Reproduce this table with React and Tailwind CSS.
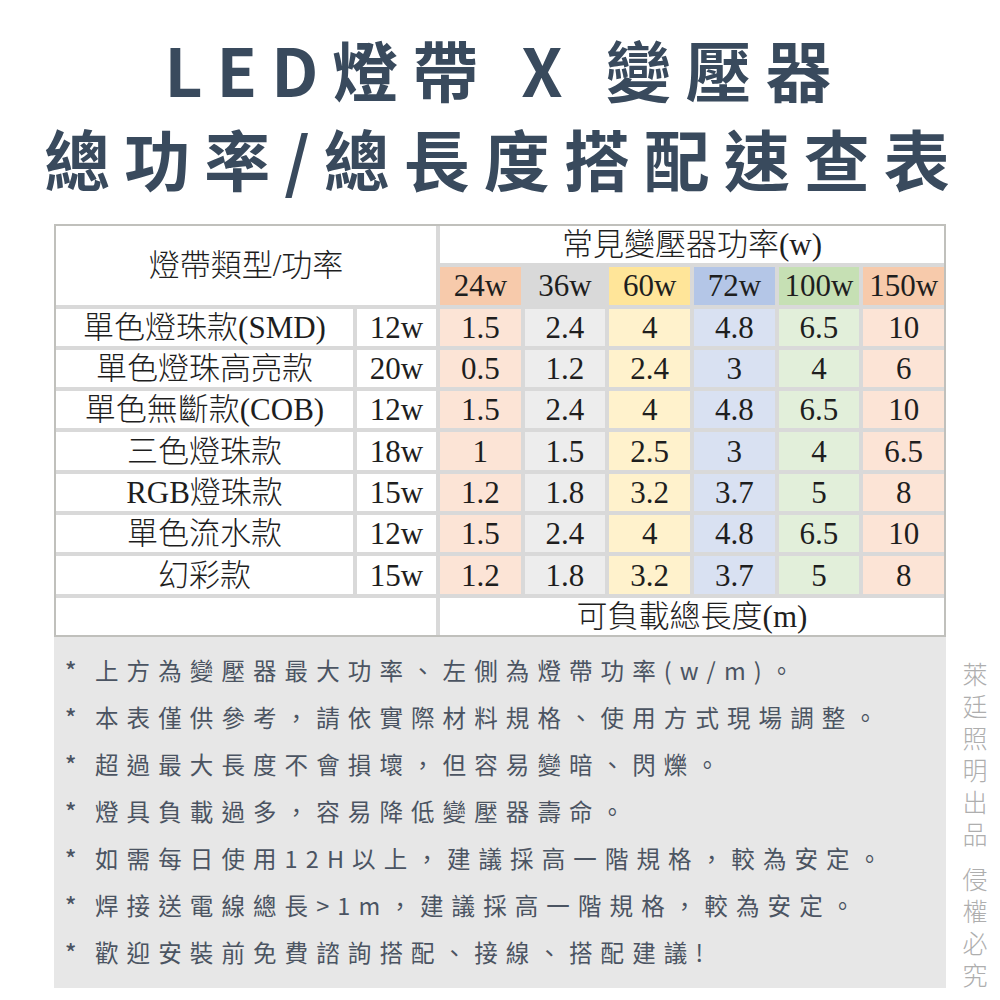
import React from "react";

const headBg = ["bg-[#f7caab]", "bg-[#d9d9d9]", "bg-[#ffe599]", "bg-[#b4c6e7]", "bg-[#c6e0b4]", "bg-[#f7caab]"];
const dataBg = ["bg-[#fce4d6]", "bg-[#ededed]", "bg-[#fff2cc]", "bg-[#d9e1f2]", "bg-[#e2efda]", "bg-[#fce4d6]"];
const watts = ["24w", "36w", "60w", "72w", "100w", "150w"];

const rows = [
  ["單色燈珠款(SMD)", "12w", ["1.5", "2.4", "4", "4.8", "6.5", "10"]],
  ["單色燈珠高亮款", "20w", ["0.5", "1.2", "2.4", "3", "4", "6"]],
  ["單色無斷款(COB)", "12w", ["1.5", "2.4", "4", "4.8", "6.5", "10"]],
  ["三色燈珠款", "18w", ["1", "1.5", "2.5", "3", "4", "6.5"]],
  ["RGB燈珠款", "15w", ["1.2", "1.8", "3.2", "3.7", "5", "8"]],
  ["單色流水款", "12w", ["1.5", "2.4", "4", "4.8", "6.5", "10"]],
  ["幻彩款", "15w", ["1.2", "1.8", "3.2", "3.7", "5", "8"]],
];

const notes = [
  "上方為變壓器最大功率、左側為燈帶功率(w/m)。",
  "本表僅供參考，請依實際材料規格、使用方式現場調整。",
  "超過最大長度不會損壞，但容易變暗、閃爍。",
  "燈具負載過多，容易降低變壓器壽命。",
  "如需每日使用12H以上，建議採高一階規格，較為安定。",
  "焊接送電線總長>1m，建議採高一階規格，較為安定。",
  "歡迎安裝前免費諮詢搭配、接線、搭配建議!",
];

function Cell({ className = "", children }) {
  return (
    <div className={"flex items-center justify-center leading-none whitespace-nowrap " + className}>
      {children}
    </div>
  );
}

export default function App() {
  return (
    <div className="w-[1000px] h-[1000px] bg-white overflow-hidden font-['Noto_Sans_CJK_TC',sans-serif]">
      {/* Title */}
      <div className="h-[224px] pt-[24px] text-center text-[66px] font-bold leading-[89px] text-[#394a5d] whitespace-nowrap">
        <div className="tracking-[14px] pl-[10px]">LED燈帶 X 變壓器</div>
        <div className="tracking-[14px] pl-[8px]">總功率/總長度搭配速查表</div>
      </div>

      <div className="pl-[54px]">
        {/* Table */}
        <div className="w-[892px] h-[413px] border-2 border-[#c0c0bc] bg-[#d9d9d9] grid grid-cols-[297px_79px_repeat(6,1fr)] grid-rows-[repeat(10,1fr)] gap-[4px] text-[31px] text-[#1e1e1e] font-light font-['Liberation_Serif','Noto_Sans_CJK_TC',serif]">
          <Cell className="col-span-2 row-span-2 bg-white">燈帶類型/功率</Cell>
          <Cell className="col-span-6 bg-white">常見變壓器功率(w)</Cell>
          {watts.map((w, i) => (
            <Cell key={w} className={headBg[i]}>{w}</Cell>
          ))}
          {rows.map(([name, w, vals]) => (
            <React.Fragment key={name}>
              <Cell className="bg-white">{name}</Cell>
              <Cell className="bg-white">{w}</Cell>
              {vals.map((v, i) => (
                <Cell key={i} className={dataBg[i]}>{v}</Cell>
              ))}
            </React.Fragment>
          ))}
          <Cell className="col-span-2 bg-white"></Cell>
          <Cell className="col-span-6 bg-white">可負載總長度(m)</Cell>
        </div>

        {/* Notes + vertical mark */}
        <div className="flex">
          <div className="w-[892px] h-[351px] bg-[#e7e7e7] pl-[11px] pt-[10px] text-[23.5px] leading-[47px] text-[#4b5462] font-normal">
            {notes.map((n) => (
              <div key={n} className="flex whitespace-nowrap">
                <span className="w-[30px] shrink-0 font-medium">*</span>
                <span className="tracking-[8.1px]">{n}</span>
              </div>
            ))}
          </div>
          <div className="ml-[15px] pt-[25px]">
            <div className="[writing-mode:vertical-rl] text-[25px] leading-[28px] tracking-[7px] text-[#aeaeae] font-light whitespace-nowrap">
              萊廷照明出品 侵權必究
            </div>
          </div>
        </div>
      </div>
    </div>
  );
}
